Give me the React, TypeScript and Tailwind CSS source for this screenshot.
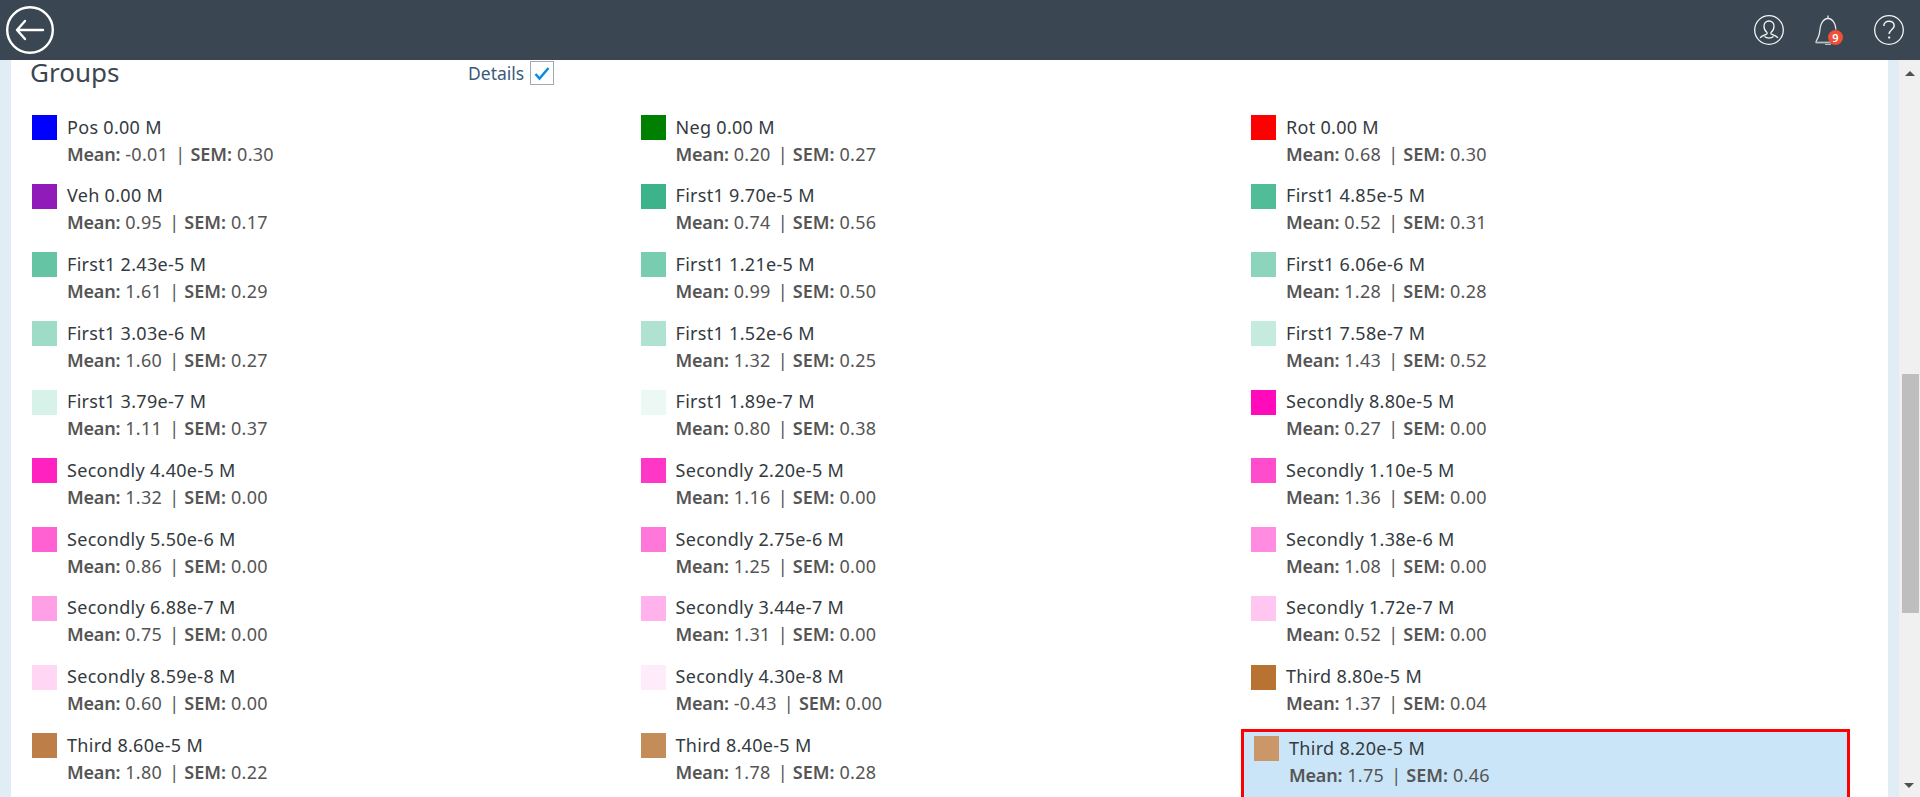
const GROUPS = [
  { name: "Pos 0.00 M", mean: "-0.01", sem: "0.30", color: "#0000ff" },
  { name: "Neg 0.00 M", mean: "0.20", sem: "0.27", color: "#008000" },
  { name: "Rot 0.00 M", mean: "0.68", sem: "0.30", color: "#ff0000" },
  { name: "Veh 0.00 M", mean: "0.95", sem: "0.17", color: "#911bb8" },
  { name: "First1 9.70e-5 M", mean: "0.74", sem: "0.56", color: "#3cb38b" },
  { name: "First1 4.85e-5 M", mean: "0.52", sem: "0.31", color: "#51bc98" },
  { name: "First1 2.43e-5 M", mean: "1.61", sem: "0.29", color: "#65c4a4" },
  { name: "First1 1.21e-5 M", mean: "0.99", sem: "0.50", color: "#78ccb0" },
  { name: "First1 6.06e-6 M", mean: "1.28", sem: "0.28", color: "#8cd4bc" },
  { name: "First1 3.03e-6 M", mean: "1.60", sem: "0.27", color: "#9fdcc8" },
  { name: "First1 1.52e-6 M", mean: "1.32", sem: "0.25", color: "#b0e2d2" },
  { name: "First1 7.58e-7 M", mean: "1.43", sem: "0.52", color: "#c4ebde" },
  { name: "First1 3.79e-7 M", mean: "1.11", sem: "0.37", color: "#d7f2e9" },
  { name: "First1 1.89e-7 M", mean: "0.80", sem: "0.38", color: "#ecf8f4" },
  { name: "Secondly 8.80e-5 M", mean: "0.27", sem: "0.00", color: "#ff0bbb" },
  { name: "Secondly 4.40e-5 M", mean: "1.32", sem: "0.00", color: "#ff22c0" },
  { name: "Secondly 2.20e-5 M", mean: "1.16", sem: "0.00", color: "#ff37c6" },
  { name: "Secondly 1.10e-5 M", mean: "1.36", sem: "0.00", color: "#ff4ccc" },
  { name: "Secondly 5.50e-6 M", mean: "0.86", sem: "0.00", color: "#ff61d3" },
  { name: "Secondly 2.75e-6 M", mean: "1.25", sem: "0.00", color: "#ff77d9" },
  { name: "Secondly 1.38e-6 M", mean: "1.08", sem: "0.00", color: "#ff8ce0" },
  { name: "Secondly 6.88e-7 M", mean: "0.75", sem: "0.00", color: "#ff9fe5" },
  { name: "Secondly 3.44e-7 M", mean: "1.31", sem: "0.00", color: "#ffb2ec" },
  { name: "Secondly 1.72e-7 M", mean: "0.52", sem: "0.00", color: "#ffc6f1" },
  { name: "Secondly 8.59e-8 M", mean: "0.60", sem: "0.00", color: "#ffd7f5" },
  { name: "Secondly 4.30e-8 M", mean: "-0.43", sem: "0.00", color: "#ffecfa" },
  { name: "Third 8.80e-5 M", mean: "1.37", sem: "0.04", color: "#b87333" },
  { name: "Third 8.60e-5 M", mean: "1.80", sem: "0.22", color: "#bd7f47" },
  { name: "Third 8.40e-5 M", mean: "1.78", sem: "0.28", color: "#c38c59" },
  { name: "Third 8.20e-5 M", mean: "1.75", sem: "0.46", color: "#cb9768", selected: true },
];

function Header() {
  return (
    <div className="h-[60px] shrink-0 bg-[#3a4651] flex items-center justify-between pl-[6px] pr-[16px]">
      <svg width="48" height="48" viewBox="0 0 48 48" fill="none" stroke="white" strokeLinecap="round" strokeLinejoin="round">
        <circle cx="24" cy="24" r="22.8" strokeWidth="2.400" />
        <path d="M37 24H11.500M19 15l-8 9 8 9" strokeWidth="2.400" />
      </svg>
      <div className="flex items-center gap-[30px]">
        <svg width="30" height="30" viewBox="0 0 30 30" fill="none" stroke="#f2f4f5" strokeWidth="1.3">
          <circle cx="15" cy="15" r="14.3" />
          <path d="M15 6c-3 0-5 2.300-5 5.200 0 2.600 1.200 4.800 2.800 6 .5.400.5 1.500-.2 1.900-2 1-5 1.700-6.600 3.700M15 6c3 0 5 2.300 5 5.200 0 2.600-1.200 4.800-2.800 6-.5.400-.5 1.500.2 1.900 2 1 5 1.700 6.600 3.700M10.500 21.600c1.200 1 2.900 1.500 4.500 1.500s3.300-.5 4.500-1.500" />
        </svg>
        <div className="relative w-[30px] h-[30px]">
          <svg width="30" height="30" viewBox="0 0 30 30" fill="none" stroke="#e8ebed" strokeWidth="1.3">
            <path d="M14 .5v3" />
            <path d="M2 27c0-1 1-2 2.500-5.500 2-4.500.5-8 3-13C9 5.500 11.500 3.500 14 3.500s5 2 6.500 5c1 2 1 4 1.500 6" />
            <path d="M1.500 27.500H20" stroke="#b8bec3" strokeWidth="1.800" />
            <path d="M11 29.500h6" stroke="#b8bec3" />
          </svg>
          <span className="absolute left-[14px] top-[15px] w-[15px] h-[15px] rounded-full bg-[#f0503a] flex items-center justify-center text-white text-[11px] font-semibold leading-none">
            9
          </span>
        </div>
        <svg width="30" height="30" viewBox="0 0 30 30" fill="none" stroke="#f2f4f5" strokeWidth="1.3">
          <circle cx="15" cy="15" r="14.3" />
          <path d="M9.800 11c0-3 2.300-4.800 5.200-4.800s5.200 1.800 5.200 4.500c0 3.700-5 4-5 8.300" strokeWidth="1.500" />
          <path d="M15.200 21.500v2" strokeWidth="2" />
        </svg>
      </div>
    </div>
  );
}

function Scrollbar() {
  return (
    <div className="w-[21px] shrink-0 bg-[#f0f0f0] flex flex-col items-center relative">
      <div className="mt-[11px] w-0 h-0 border-l-[5px] border-r-[5px] border-b-[5px] border-l-transparent border-r-transparent border-b-[#505050]" />
      <div className="mt-[298px] ml-[1px] w-[17px] h-[239px] bg-[#bebebe]" />
      <div className="absolute bottom-[9px] left-[5px] w-0 h-0 border-l-[5px] border-r-[5px] border-t-[5px] border-l-transparent border-r-transparent border-t-[#505050]" />
    </div>
  );
}

export default function App() {
  return (
    <div className="h-[797px] flex flex-col overflow-hidden font-['Noto_Sans',sans-serif] bg-white">
      <Header />
      <div className="flex flex-1 min-h-0">
        <div className="w-[11px] shrink-0 bg-[#e0edf5]" />
        <div className="flex-1 min-w-0 bg-white pl-[11px] pr-[38px]">
          <div className="h-[51px] flex items-start">
            <div className="w-[446px] pl-[8px] text-[26px] leading-[24px] text-[#3b4651]">Groups</div>
            <div className="flex items-center gap-[6px] text-[#3a5a7a] text-[17.500px] leading-[24px] mt-[1px]">
              Details
              <span className="w-[24px] h-[24px] border border-[#a0a8b0] flex items-center justify-center">
                <svg width="18" height="18" viewBox="0 0 18 18" fill="none" stroke="#0c8ce0" strokeWidth="2.500">
                  <path d="M2.500 10l4 4.500L15.500 4" />
                </svg>
              </span>
            </div>
          </div>
          <div className="grid grid-cols-[608.500px_610.500px_609px] auto-rows-[68.700px]">
            {GROUPS.map((g) => (
              <div
                key={g.name}
                className={`flex pt-[4px] pl-[10px] h-[72px] ${g.selected ? "border-[3px] border-[#ff0000] bg-[#cae5f8]" : ""}`}
              >
                <div className="w-[25px] h-[25px] shrink-0" style={{ backgroundColor: g.color }} />
                <div className="ml-[10px] mt-[-1.500px] text-[18px] leading-[26px] tracking-[0.3px]">
                  <div className="text-[#333a40]">{g.name}</div>
                  <div className="mt-[1px] text-[#555555]">
                    <b className="font-semibold tracking-[-0.2px]">Mean:</b> {g.mean} <span className="ml-[2px]">|</span>{" "}
                    <b className="font-semibold tracking-[0px]">SEM:</b> {g.sem}
                  </div>
                </div>
              </div>
            ))}
          </div>
        </div>
        <div className="w-[11px] shrink-0 bg-[#e0edf5]" />
        <Scrollbar />
      </div>
    </div>
  );
}
